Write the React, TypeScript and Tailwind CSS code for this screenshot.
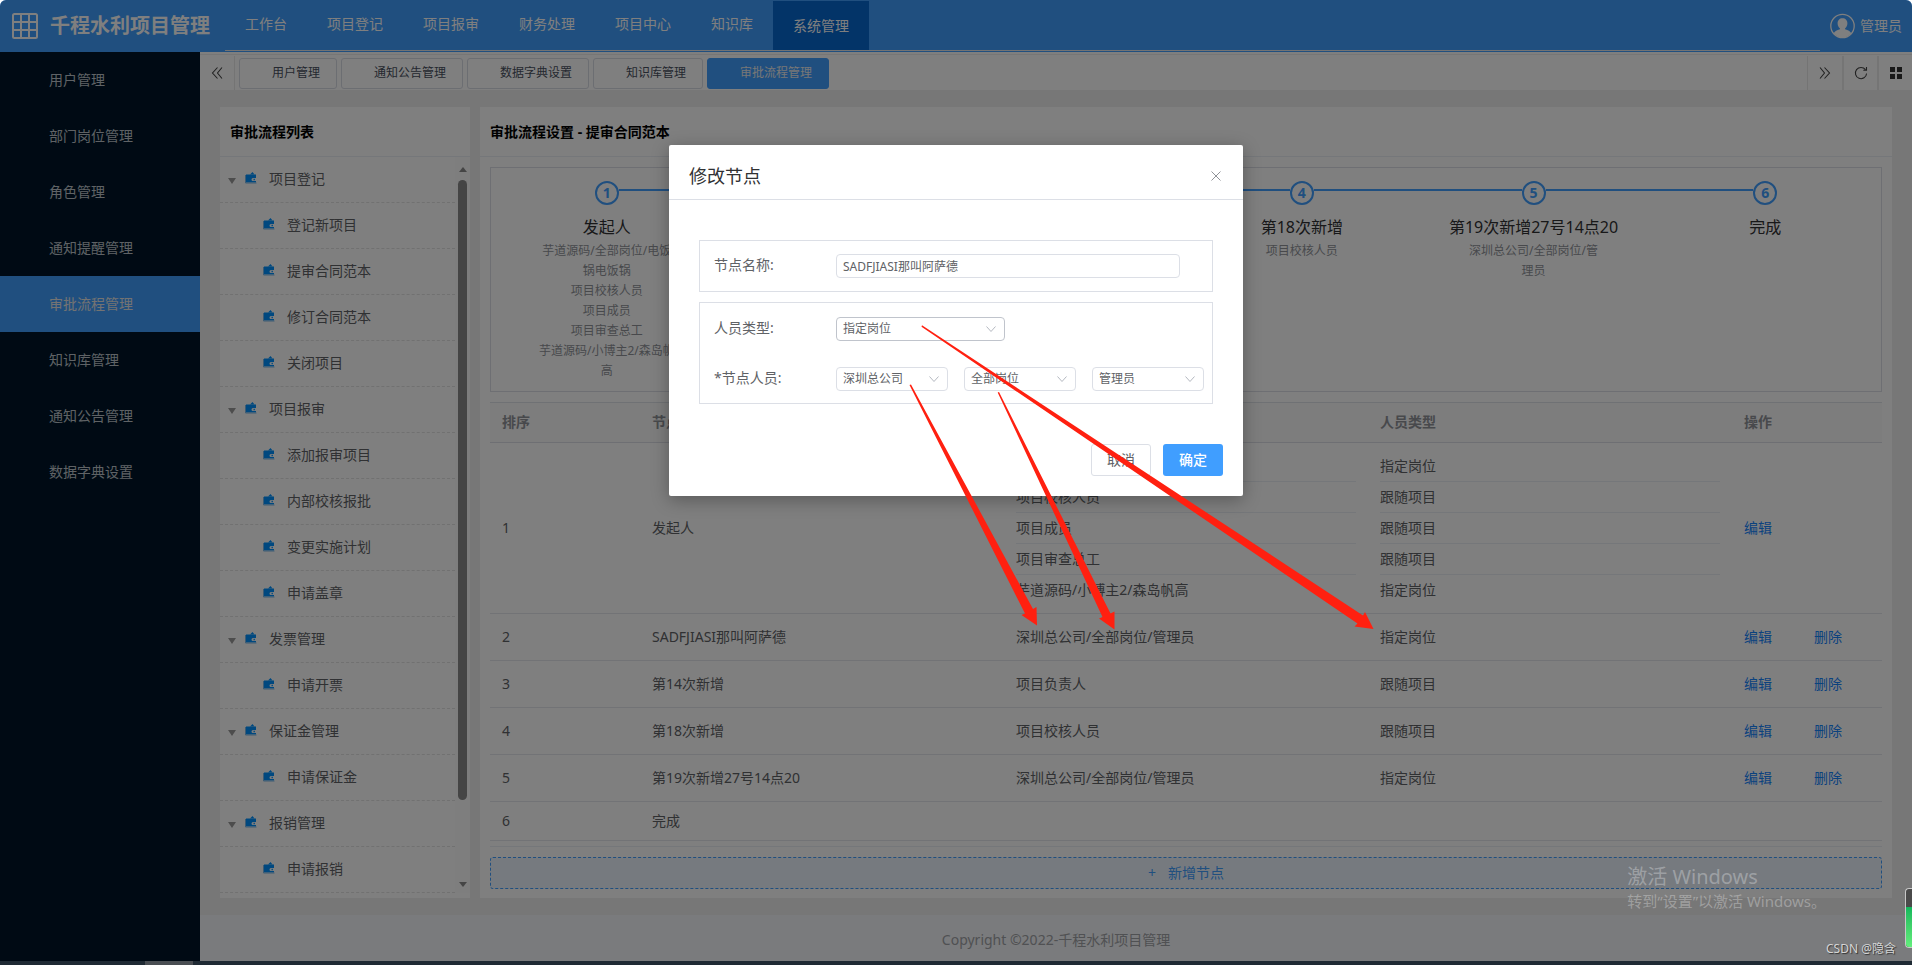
import React from "react";

const navItems = ["工作台", "项目登记", "项目报审", "财务处理", "项目中心", "知识库", "系统管理"];
const sideItems = ["用户管理", "部门岗位管理", "角色管理", "通知提醒管理", "审批流程管理", "知识库管理", "通知公告管理", "数据字典设置"];
const tabs = ["用户管理", "通知公告管理", "数据字典设置", "知识库管理", "审批流程管理"];

const tree: { label: string; children: string[] }[] = [
  { label: "项目登记", children: ["登记新项目", "提审合同范本", "修订合同范本", "关闭项目"] },
  { label: "项目报审", children: ["添加报审项目", "内部校核报批", "变更实施计划", "申请盖章"] },
  { label: "发票管理", children: ["申请开票"] },
  { label: "保证金管理", children: ["申请保证金"] },
  { label: "报销管理", children: ["申请报销"] },
];

const steps: { title: string; lines: string[] }[] = [
  { title: "发起人", lines: ["芋道源码/全部岗位/电饭锅电饭锅", "项目校核人员", "项目成员", "项目审查总工", "芋道源码/小博主2/森岛帆高"] },
  { title: "SADFJIASI那叫阿萨德", lines: ["深圳总公司/全部岗位/管理员"] },
  { title: "第14次新增", lines: ["项目负责人"] },
  { title: "第18次新增", lines: ["项目校核人员"] },
  { title: "第19次新增27号14点20", lines: ["深圳总公司/全部岗位/管理员"] },
  { title: "完成", lines: [] },
];

const rows: { name: string; people: string[]; types: string[]; ops: string[] }[] = [
  {
    name: "发起人",
    people: ["芋道源码/全部岗位/电饭锅电饭锅", "项目校核人员", "项目成员", "项目审查总工", "芋道源码/小博主2/森岛帆高"],
    types: ["指定岗位", "跟随项目", "跟随项目", "跟随项目", "指定岗位"],
    ops: ["编辑"],
  },
  { name: "SADFJIASI那叫阿萨德", people: ["深圳总公司/全部岗位/管理员"], types: ["指定岗位"], ops: ["编辑", "删除"] },
  { name: "第14次新增", people: ["项目负责人"], types: ["跟随项目"], ops: ["编辑", "删除"] },
  { name: "第18次新增", people: ["项目校核人员"], types: ["跟随项目"], ops: ["编辑", "删除"] },
  { name: "第19次新增27号14点20", people: ["深圳总公司/全部岗位/管理员"], types: ["指定岗位"], ops: ["编辑", "删除"] },
  { name: "完成", people: [], types: [], ops: [] },
];

function WalletIcon() {
  return (
    <svg width="12" height="12" viewBox="0 0 12 12" className="shrink-0" aria-hidden="true">
      <path d="M5 2.5 7.500 0 9.500 2.500Z" fill="#0091ff" />
      <path d="M1 2.500h10v3.500H8a1 1 0 0 0 0 3h3v1.500H1Z" fill="#0091ff" />
      <path d="M8.500 6.800h1.400v1.400H8.500Z" fill="#0091ff" />
      <path d="M0.500 3v8h11" stroke="#7cb8e8" fill="none" />
    </svg>
  );
}

function DoubleChevron({ flip }: { flip?: boolean }) {
  return (
    <svg width="12" height="14" viewBox="0 0 12 14" fill="none" stroke="#444" strokeWidth="1.1" aria-hidden="true">
      <path d={flip ? "M1 1.500l4.500 5.500L1 12.500M5.500 1.500l5 5.500-5 5.500" : "M11 1.500 6.500 7l4.500 5.500M6.500 1.500l-5 5.500 5 5.500"} />
    </svg>
  );
}

function Header() {
  return (
    <header className="flex h-[52px] shrink-0 items-center bg-[#409eff] text-white">
      <div className="flex w-[225px] shrink-0 items-center gap-3 pl-3">
        <svg width="26" height="26" viewBox="0 0 26 26" fill="none" stroke="#fff" strokeWidth="2" aria-hidden="true">
          <rect x="1" y="1" width="24" height="24" rx="1.500" />
          <path d="M9 1v24M17 1v24M1 9h24M1 17h24" />
        </svg>
        <h1 className="text-xl leading-6 font-bold whitespace-nowrap">千程水利项目管理</h1>
      </div>
      <nav className="mr-2 flex h-[51px] flex-1 self-start border-b border-[#e6e6e6]">
        {navItems.map((item) => (
          <a
            key={item}
            href="#"
            className={
              item === "系统管理"
                ? "mt-px flex items-center bg-[#0668d1] px-5 text-sm"
                : "flex items-center px-5 pb-[2px] text-sm"
            }
          >
            {item}
          </a>
        ))}
      </nav>
      <div className="flex shrink-0 items-center gap-[5px] pr-[10px] pl-[2px] text-sm">
        <svg width="25" height="26" viewBox="0 0 25 26" aria-hidden="true">
          <circle cx="12.5" cy="13" r="11.700" fill="none" stroke="#fff" strokeWidth="1.3" />
          <path d="M12.500 5.200c3 0 4.900 2.100 4.900 5 0 2.300-1 4.100-2.300 5.100v1c3 1 5.200 1.900 6.200 4A11.300 11.300 0 0 1 12.500 24.600 11.300 11.300 0 0 1 3.700 20.300c1-2.100 3.200-3 6.200-4v-1c-1.300-1-2.300-2.800-2.300-5.100 0-2.900 1.900-5 4.900-5Z" fill="#fff" />
        </svg>
        <span>管理员</span>
      </div>
    </header>
  );
}

function Sidebar() {
  return (
    <aside className="w-[200px] shrink-0 bg-[#001529]">
      {sideItems.map((item) => (
        <a
          key={item}
          href="#"
          className={
            item === "审批流程管理"
              ? "flex h-14 items-center bg-[#409eff] pb-px pl-[49px] text-sm text-[#e6e6e6]"
              : "flex h-14 items-center pb-px pl-[49px] text-sm text-[#bfc5cb]"
          }
        >
          {item}
        </a>
      ))}
    </aside>
  );
}

function TabBar() {
  return (
    <div className="flex h-[38px] shrink-0 items-end border-t-2 border-white bg-white">
      <div className="flex h-9 flex-1 items-end border-t border-[#ececec]">
        <button type="button" aria-label="向左滚动" className="flex h-[34px] w-[35px] items-center justify-center border-r border-[#e8e8e8]">
          <DoubleChevron />
        </button>
        <div className="flex h-[34px] flex-1 items-center gap-1 pl-1">
          {tabs.map((tab) => (
            <button
              key={tab}
              type="button"
              className={
                tab === "审批流程管理"
                  ? "h-[31px] rounded-[3px] border border-[#409eff] bg-[#409eff] pr-4 pl-8 text-xs text-[#eee]"
                  : "h-[31px] rounded-[3px] border border-[#d8dce5] bg-white pr-4 pl-8 text-xs text-[#495060]"
              }
            >
              {tab}
            </button>
          ))}
        </div>
        <button type="button" aria-label="向右滚动" className="flex h-[34px] w-[35px] items-center justify-center border-l border-[#e8e8e8]">
          <DoubleChevron flip />
        </button>
        <button type="button" aria-label="刷新" className="flex h-[34px] w-[35px] items-center justify-center border-l-2 border-[#ebebeb]">
          <svg width="14" height="14" viewBox="0 0 14 14" fill="none" stroke="#444" strokeWidth="1.1" aria-hidden="true">
            <path d="M12.600 7.500A5.600 5.600 0 1 1 11.500 3.700M12.500 1v3.200H9.300" />
          </svg>
        </button>
        <button type="button" aria-label="菜单" className="flex h-[34px] w-[35px] items-center justify-center border-l-2 border-[#ebebeb]">
          <svg width="12" height="12" viewBox="0 0 12 12" fill="#333" aria-hidden="true">
            <path d="M0 0h5v5H0zM7 0h5v5H7zM0 7h5v5H0zM7 7h5v5H7z" />
          </svg>
        </button>
      </div>
    </div>
  );
}

function ProcessTree() {
  return (
    <section className="flex w-[250px] shrink-0 flex-col bg-white">
      <h2 className="h-[50px] border-b border-[#ebeef5] pl-[10px] text-sm leading-[50px] font-bold text-black">审批流程列表</h2>
      <div className="flex flex-1 pb-[5px]">
        <ul className="flex-1">
          {tree.map((group) => (
            <li key={group.label}>
              <div className="flex h-[46px] items-center border-b border-dashed border-[#e2e2e2] pb-[2px] pl-2">
                <svg width="8" height="6" viewBox="0 0 8 6" className="mt-1" aria-hidden="true">
                  <path d="M0 0h8L4 6Z" fill="#9a9a9a" />
                </svg>
                <span className="mr-3 mb-[2px] ml-[9px]"><WalletIcon /></span>
                <span className="text-sm text-[#606266]">{group.label}</span>
              </div>
              <ul>
                {group.children.map((child) => (
                  <li key={child} className="flex h-[46px] items-center border-b border-dashed border-[#e2e2e2] pb-[2px] pl-[43px]">
                    <span className="mr-3 mb-[2px]"><WalletIcon /></span>
                    <span className="text-sm text-[#606266]">{child}</span>
                  </li>
                ))}
              </ul>
            </li>
          ))}
        </ul>
        <div className="flex w-[15px] flex-col items-center bg-[#fcfcfc] pt-[10px] pb-[6px]" aria-hidden="true">
          <svg width="8" height="5" viewBox="0 0 8 5"><path d="M0 5h8L4 0Z" fill="#8a8a8a" /></svg>
          <div className="mt-2 w-[9px] flex-1 rounded-full bg-[#8a8a8a]" />
          <div className="h-[82px]" />
          <svg width="8" height="5" viewBox="0 0 8 5"><path d="M0 0h8L4 5Z" fill="#8a8a8a" /></svg>
        </div>
      </div>
    </section>
  );
}

function Steps() {
  return (
    <ol className="mt-[10px] grid h-[225px] grid-cols-6 border border-[#dcdfe6] pt-[13px]">
      {steps.map((step, i) => (
        <li key={step.title} className="text-center">
          <div className="flex h-6 items-center">
            <div className={i === 0 ? "mb-[6px] h-[2px] flex-1" : "mb-[6px] h-[2px] flex-1 bg-[#409eff]"} />
            <div className="flex size-6 items-center justify-center rounded-full border-2 border-[#409eff] text-sm font-bold text-[#409eff]">
              {i + 1}
            </div>
            <div className={i === 5 ? "mb-[6px] h-[2px] flex-1" : "mb-[6px] h-[2px] flex-1 bg-[#409eff]"} />
          </div>
          <p className="pt-1 text-base leading-9 whitespace-nowrap text-[#303133]">{step.title}</p>
          <div className="-mt-1 px-[20%] text-xs leading-5 break-all text-[#909399]">
            {step.lines.map((line) => (
              <p key={line}>{line}</p>
            ))}
          </div>
        </li>
      ))}
    </ol>
  );
}

function CellLines({ lines }: { lines: string[] }) {
  return (
    <>
      {lines.map((line, i) => (
        <div
          key={i}
          className={i < lines.length - 1 ? "h-[31px] truncate border-b border-[#ebeef5] leading-[30px]" : "h-[30px] leading-[30px]"}
        >
          {line}
        </div>
      ))}
    </>
  );
}

function NodeTable() {
  return (
    <div className="mt-[10px] border-t border-b border-[#dfe2e8] border-b-[#ebeef5] pb-[5px]">
      <table className="w-full table-fixed border-collapse text-left text-sm text-[#606266]">
        <colgroup>
          <col className="w-[150px]" />
          <col />
          <col />
          <col />
          <col className="w-[150px]" />
        </colgroup>
        <thead>
          <tr className="h-[39px] border-b border-[#dcdfe6] bg-[#fafafa] text-[#909399]">
            <th className="px-3 font-bold">排序</th>
            <th className="px-3 font-bold">节点名称</th>
            <th className="px-3 font-bold">节点人员</th>
            <th className="px-3 font-bold">人员类型</th>
            <th className="px-3 font-bold">操作</th>
          </tr>
        </thead>
        <tbody>
          {rows.map((row, i) => (
            <tr key={row.name} className="h-[39px] border-b border-[#e4e7ed]">
              <td className="px-3">{i + 1}</td>
              <td className="px-3">{row.name}</td>
              <td className={row.people.length > 0 ? "px-3 py-2" : "px-3"}><CellLines lines={row.people} /></td>
              <td className={row.types.length > 0 ? "px-3 py-2" : "px-3"}><CellLines lines={row.types} /></td>
              <td className="px-3">
                <div className="flex gap-[42px] whitespace-nowrap">
                  {row.ops.map((op) => (
                    <a key={op} href="#" className="text-[#1684fc]">{op}</a>
                  ))}
                </div>
              </td>
            </tr>
          ))}
        </tbody>
      </table>
    </div>
  );
}

const selectClass =
  "h-6 w-full appearance-none rounded border bg-white pr-6 pl-[6px] text-xs leading-5 text-[#606266] outline-none";

function SelectBox({ id, label, value, wide }: { id: string; label: string; value: string; wide?: boolean }) {
  return (
    <div className={wide ? "relative w-[169px]" : "relative w-28"}>
      <select id={id} aria-label={label} defaultValue={value} className={wide ? selectClass + " border-[#c0c4cc]" : selectClass + " border-[#dcdfe6]"}>
        <option>{value}</option>
      </select>
      <svg width="10" height="6" viewBox="0 0 10 6" fill="none" stroke="#b4b8c0" className="pointer-events-none absolute top-[9px] right-[9px]" aria-hidden="true">
        <path d="M0.500 0.500 5 5.500 9.500 0.500" />
      </svg>
    </div>
  );
}

function Dialog() {
  return (
    <div role="dialog" aria-modal="true" aria-labelledby="dialog-title" className="absolute top-[145px] left-1/2 w-[574px] -translate-x-1/2 rounded-[2px] bg-white shadow-[0_4px_18px_rgba(0,0,0,0.3)]">
      <div className="flex h-[55px] items-center justify-between border-b border-[#dcdfe6] px-5 pt-2">
        <h2 id="dialog-title" className="text-lg leading-6 text-[#303133]">修改节点</h2>
        <button type="button" aria-label="关闭" className="flex h-4 w-[14px] items-center justify-center">
          <svg width="10" height="10" viewBox="0 0 10 10" stroke="#909399" aria-hidden="true">
            <path d="M0.500 0.500l9 9M9.500 0.500l-9 9" />
          </svg>
        </button>
      </div>
      <div className="px-[30px] pt-10 text-sm text-[#606266]">
        <div className="flex h-[52px] items-center border border-[#dcdfe6] pl-[14px]">
          <label htmlFor="node-name" className="w-[122px] shrink-0 pb-[2px]">节点名称:</label>
          <input
            id="node-name"
            defaultValue="SADFJIASI那叫阿萨德"
            className="h-6 w-[344px] rounded border border-[#dcdfe6] px-[6px] text-xs leading-5 text-[#606266] outline-none"
          />
        </div>
        <div className="mt-[10px] border border-[#dcdfe6] pt-[14px] pb-3 pl-[14px]">
          <div className="flex h-6 items-center">
            <label htmlFor="person-type" className="w-[122px] shrink-0 pb-[2px]">人员类型:</label>
            <SelectBox id="person-type" label="人员类型" value="指定岗位" wide />
          </div>
          <div className="mt-[26px] flex h-6 items-center">
            <label htmlFor="company" className="w-[122px] shrink-0 pb-[2px]">*节点人员:</label>
            <div className="flex gap-4">
              <SelectBox id="company" label="公司" value="深圳总公司" />
              <SelectBox id="post" label="岗位" value="全部岗位" />
              <SelectBox id="person" label="人员" value="管理员" />
            </div>
          </div>
        </div>
      </div>
      <div className="flex justify-end gap-3 px-5 pt-10 pb-5 text-sm">
        <button type="button" className="h-8 w-[60px] rounded-[3px] border border-[#dcdfe6] bg-white text-[#606266]">取消</button>
        <button type="button" className="h-8 w-[60px] rounded-[3px] bg-[#409eff] font-medium text-white">确定</button>
      </div>
    </div>
  );
}

function Annotations() {
  return (
    <svg width="480" height="320" viewBox="900 320 480 320" className="pointer-events-none absolute top-[320px] left-1/2 -translate-x-[56px]" fill="#ff2010" aria-hidden="true">
      <path d="M922 325.300 1363 615.500 1365 612 1373.500 629 1354.500 626.500 1357.500 623.500 921.500 326.700Z" />
      <path d="M909.500 385 911 384.500 1033 609 1036.500 607 1037 625.500 1021.500 615 1025 613.500Z" />
      <path d="M997.700 392.500 999 392 1110.500 613.500 1114.500 611.500 1114.500 629.500 1099 618.500 1102.500 617Z" />
    </svg>
  );
}

export default function App() {
  return (
    <div className="bg-white font-['Noto_Sans','Noto_Sans_CJK_SC',sans-serif]">
      <div className="relative flex min-h-screen flex-col overflow-hidden rounded-t-md bg-white">
        <Header />
        <div className="flex flex-1">
          <Sidebar />
          <div className="flex min-w-0 flex-1 flex-col bg-[#eeeeee]">
            <TabBar />
            <main className="flex gap-[10px] px-5 py-[17px]">
              <ProcessTree />
              <section className="min-w-0 flex-1 bg-white">
                <h2 className="h-[50px] border-b border-[#ebeef5] pl-[10px] text-sm leading-[50px] font-bold text-black">审批流程设置 - 提审合同范本</h2>
                <div className="px-[10px] pb-2">
                  <Steps />
                  <NodeTable />
                  <button type="button" className="mt-[10px] flex h-8 w-full items-center justify-center gap-3 rounded-[3px] border border-dashed border-[#409eff] bg-[#ecf5ff] text-sm text-[#409eff]">
                    <span>+</span>
                    <span>新增节点</span>
                  </button>
                </div>
              </section>
            </main>
            <footer className="flex flex-1 items-center justify-center bg-[#f5f7fa] pt-1 text-sm text-[#a0a2a6]">Copyright ©2022-千程水利项目管理</footer>
          </div>
        </div>
        <div className="flex h-1 shrink-0 bg-[#3e5468] pl-[145px]">
          <div className="w-12 bg-[#949ca6]" />
        </div>
        <div className="absolute inset-0 bg-black/50" />
        <Dialog />
        <Annotations />
        <div className="pointer-events-none absolute right-[86px] bottom-[54px] text-white/30">
          <p className="text-xl leading-7">激活 Windows</p>
          <p className="text-[15px] leading-5">转到“设置”以激活 Windows。</p>
        </div>
        <p className="absolute right-4 bottom-2 text-xs leading-4 text-[#d5d5d5] [text-shadow:1px_1px_1px_#333]">CSDN @隐含</p>
        <div className="absolute right-0 bottom-[17px] flex h-[60px] w-[7px] flex-col overflow-hidden rounded-l border border-r-0 border-[#c8c8c8] bg-[#4a4a4a] pt-[18px]">
          <div className="flex-1 bg-linear-to-b from-[#0fb85c] to-[#62ee7c]" />
        </div>
      </div>
    </div>
  );
}
